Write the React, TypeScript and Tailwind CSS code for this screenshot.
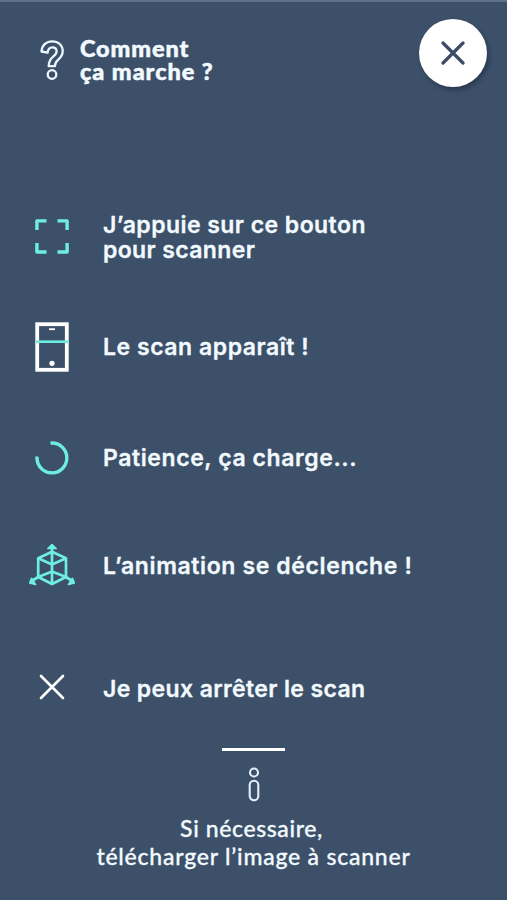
import type { ReactNode } from "react";

const aqua = "#6eeee2";

function QuestionIcon() {
  return (
    <svg width="24" height="42" viewBox="0 0 24 42" fill="none" stroke="#eef7ff" strokeWidth="2.300" strokeLinejoin="round">
      <path d="M1.500 12.500C2 6 6.500 2.300 12.200 2.300c6.200 0 10.500 4 10.500 9.800 0 4.300-2.100 6.700-4.600 8.800-2.300 1.900-3.200 3-3.200 6.300H8.700c0-5 1.700-7.300 4.400-9.600 2.100-1.800 3.500-3 3.500-5.200 0-2.600-1.800-4-4.400-4-2.900 0-4.100 1.700-4.700 5.300z" />
      <circle cx="12" cy="35.500" r="4.300" />
    </svg>
  );
}

function ScanIcon() {
  return (
    <svg width="34" height="35" viewBox="0 0 34 35" fill="none" stroke={aqua} strokeWidth="3.400" strokeLinejoin="round">
      <path d="M1.900 11V1.900H11.500M22.500 1.900H32.100V11M32.100 24V33H22.500M11.500 33H1.900V24" />
    </svg>
  );
}

function PhoneIcon() {
  return (
    <svg width="34" height="50" viewBox="0 0 34 50" fill="none">
      <rect x="2.200" y="2.200" width="29.600" height="45.600" stroke="#fff" strokeWidth="3.800" />
      <path d="M14 7.200h6" stroke="#fff" strokeWidth="1.800" />
      <path d="M1 19.700h32" stroke={aqua} strokeWidth="2.600" />
      <circle cx="17" cy="41.300" r="2.600" fill="#fff" />
    </svg>
  );
}

function LoadingIcon() {
  return (
    <svg width="34" height="34" viewBox="0 0 34 34" fill="none" stroke={aqua} strokeWidth="3.400">
      <path d="M15.500 2.100A14.900 14.900 0 1 1 2.100 15.500" />
    </svg>
  );
}

function CubeIcon() {
  return (
    <svg width="48" height="44" viewBox="0 0 48 44" fill="none" stroke={aqua} strokeWidth="2.700" strokeLinejoin="round" strokeLinecap="round">
      <path d="M24 3V41M24 8.700 38 15.300V34L24 41 10.200 34V15.300ZM10.200 15.300 24 21.500 38 15.300M10.200 34 24 28.500 38 34" />
      <path d="M10.200 34 3 38.500M38 34 45 38.500" />
      <path d="M19.800 5.500 24 1.500 28.200 5.500ZM3.500 35.300 1.700 40 7.500 41.500ZM44.500 35.300 46.300 40 40.500 41.500Z" fill={aqua} strokeWidth="1.600" />
    </svg>
  );
}

function CrossIcon() {
  return (
    <svg width="26" height="26" viewBox="0 0 26 26" fill="none" stroke="#fff" strokeWidth="2.600" strokeLinecap="round">
      <path d="M2 2 24 24M24 2 2 24" />
    </svg>
  );
}

function Step({ icon, className, children }: { icon: ReactNode; className: string; children: ReactNode }) {
  return (
    <li className={`flex items-center ${className}`}>
      <span className="flex w-[103px] shrink-0 justify-center">{icon}</span>
      <span className="flex flex-col whitespace-nowrap">{children}</span>
    </li>
  );
}

export default function App() {
  return (
    <main className="flex h-[900px] w-[507px] flex-col overflow-hidden border-t-2 border-[#5d708d] bg-[#3c5069] text-[#f3faff]">
      <header className="flex h-[110px] items-start justify-between pl-10 pr-[20px]">
        <div className="flex gap-4 pt-[37px]">
          <QuestionIcon />
          <h1 className="flex flex-col whitespace-nowrap font-['Lato','Open_Sans',sans-serif] text-[23.500px] font-black leading-[23px] [-webkit-text-stroke:0.500px_#f3faff]">
            <span className="-mt-0.5 tracking-[0.870px]">Comment</span>
            <span className="tracking-[0.950px]">ça marche ?</span>
          </h1>
        </div>
        <button aria-label="Fermer" className="mt-[17px] flex size-[68px] items-center justify-center rounded-full bg-white shadow-[2px_3px_4px_rgba(20,30,50,0.45)]">
          <svg width="24" height="24" viewBox="0 0 24 24" fill="none" stroke="#3c4c66" strokeWidth="3.200" strokeLinecap="round">
            <path d="M2 2 22 22M22 2 2 22" />
          </svg>
        </button>
      </header>

      <ul className="flex flex-col pt-[92px] font-['Inter','Open_Sans',sans-serif] text-[23px] font-semibold leading-[25px] [-webkit-text-stroke:0.300px_#f3faff]">
        <Step className="h-[64px]" icon={<ScanIcon />}>
          <span className="pt-[3px] tracking-[0.450px]">J’appuie sur ce bouton</span>
          <span className="tracking-[0.370px]">pour scanner</span>
        </Step>
        <Step className="mt-[53px] h-[52px]" icon={<PhoneIcon />}>
          <span className="tracking-[0.540px]">Le scan apparaît !</span>
        </Step>
        <Step className="mt-[59px] h-[52px]" icon={<LoadingIcon />}>
          <span className="tracking-[0.590px]">Patience, ça charge...</span>
        </Step>
        <Step className="mt-[55px] h-[52px]" icon={<CubeIcon />}>
          <span className="pt-[3px] tracking-[0.620px]">L’animation se déclenche !</span>
        </Step>
        <Step className="mt-[70px] h-[52px]" icon={<CrossIcon />}>
          <span className="pt-[4px] tracking-[0.380px]">Je peux arrêter le scan</span>
        </Step>
      </ul>

      <footer className="flex flex-col items-center pt-[35px] font-['Lato','Open_Sans',sans-serif] text-[23px] font-medium leading-[28px] [-webkit-text-stroke:0.300px_#f3faff]">
        <div className="h-[3px] w-[63px] bg-white" />
        <svg className="mt-[16px]" width="12" height="36" viewBox="0 0 12 36" fill="none" stroke="#e4efff" strokeWidth="2.100">
          <circle cx="6" cy="5.500" r="4" />
          <rect x="1.700" y="13.800" width="8.600" height="19.500" rx="4.300" />
        </svg>
        <p className="mt-[11px] flex flex-col items-center whitespace-nowrap">
          <span className="pr-1 tracking-[0.600px]">Si nécessaire,</span>
          <span className="tracking-[0.770px]">télécharger l’image à scanner</span>
        </p>
      </footer>
    </main>
  );
}
